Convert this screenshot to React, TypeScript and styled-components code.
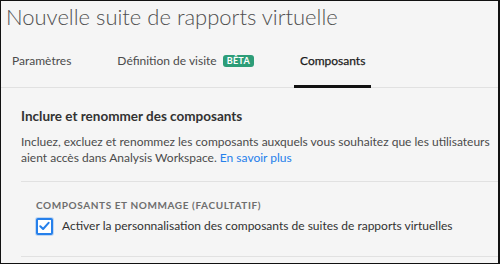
import React from 'react'
import styled, { createGlobalStyle } from 'styled-components'

const GlobalStyle = createGlobalStyle`
  html, body {
    margin: 0;
    padding: 0;
    background: #fff;
  }
  body {
    font-family: Lato, "Open Sans", sans-serif;
  }
  * { box-sizing: border-box; }
`

const tabs = [
  { id: 'params', label: 'Paramètres' },
  { id: 'visit', label: 'Définition de visite', badge: 'BÊTA' },
  { id: 'components', label: 'Composants' },
]

const App = () => {
  const active = 'components'

  return (
    <>
      <GlobalStyle />
      <Frame>
        <Title>Nouvelle suite de rapports virtuelle</Title>
        <TabList>
          {tabs.map((t) => (
            <Tab key={t.id} $active={t.id === active}>
              {t.label}
              {t.badge && <Badge>{t.badge}</Badge>}
            </Tab>
          ))}
        </TabList>
        <Section>
          <Heading>Inclure et renommer des composants</Heading>
          <Description>
            Incluez, excluez et renommez les composants auxquels vous souhaitez que les utilisateurs
            aient accès dans Analysis Workspace. <Link href="#">En savoir plus</Link>
          </Description>
          <Divider $gap={15} />
          <Group>
            <GroupLabel>Composants et nommage (facultatif)</GroupLabel>
            <CheckRow>
              <Box>
                <svg width="11" height="10" viewBox="0 0 11 10">
                  <path
                    d="M1.3 5.3 L4.1 8 L9.6 1.8"
                    fill="none"
                    stroke="#2680eb"
                    strokeWidth="2"
                    strokeLinecap="round"
                    strokeLinejoin="round"
                  />
                </svg>
              </Box>
              Activer la personnalisation des composants de suites de rapports virtuelles
            </CheckRow>
          </Group>
          <Divider $gap={21} />
        </Section>
      </Frame>
    </>
  )
}

export default App

const Frame = styled.div`
  width: 500px;
  height: 264px;
  border: 1px solid #111;
  border-right-width: 2px;
  background: #f5f5f5;
  overflow: hidden;
`

const Title = styled.h1`
  margin: 1px 0 0;
  padding-left: 5px;
  font-size: 22px;
  line-height: 30px;
  font-weight: 300;
  color: #505050;
`

const TabList = styled.div`
  display: flex;
  gap: 34px;
  padding: 21px 0 0 5px;
  border-bottom: 1px solid #e1e1e1;
`

const Tab = styled.div<{ $active: boolean }>`
  position: relative;
  display: flex;
  align-items: center;
  gap: 6px;
  height: 34px;
  padding: 0 6px 18px;
  font-size: 12px;
  line-height: 16px;
  color: ${({ $active }) => ($active ? '#1b1b1b' : '#4b4b4b')};
  -webkit-text-stroke: ${({ $active }) => ($active ? '0.25px #1b1b1b' : '0')};

  &::after {
    content: '';
    display: ${({ $active }) => ($active ? 'block' : 'none')};
    position: absolute;
    left: 0;
    right: 0;
    bottom: -1px;
    height: 3px;
    background: #111;
  }
`

const Badge = styled.span`
  display: inline-block;
  padding: 0 4px;
  border-radius: 3px;
  background: #2d9d78;
  color: #fff;
  font-size: 9px;
  line-height: 12px;
  font-weight: 700;
  letter-spacing: 0.3px;
`

const Section = styled.div`
  padding: 19px 0 0 20px;
`

const Heading = styled.h2`
  margin: 0;
  font-size: 13.5px;
  line-height: 18px;
  font-weight: 700;
  color: #323232;
`

const Description = styled.p`
  margin: 9px 0 0;
  font-size: 12px;
  line-height: 16px;
  color: #4b4b4b;
`

const Link = styled.a`
  color: #2680eb;
  text-decoration: none;
`

const Divider = styled.div<{ $gap: number }>`
  height: 1px;
  margin-top: ${({ $gap }) => $gap}px;
  background: #e1e1e1;
`

const Group = styled.div`
  padding: 16px 0 0 15px;
`

const GroupLabel = styled.div`
  font-size: 10px;
  line-height: 14px;
  font-weight: 700;
  letter-spacing: 0.06em;
  text-transform: uppercase;
  color: #6e6e6e;
`

const CheckRow = styled.label`
  display: flex;
  align-items: center;
  gap: 9px;
  margin-top: 5px;
  font-size: 12px;
  line-height: 18px;
  color: #323232;
`

const Box = styled.span`
  display: flex;
  align-items: center;
  justify-content: center;
  width: 17px;
  height: 17px;
  border: 2px solid #2680eb;
  border-radius: 2px;
  background: #fff;
  box-shadow: 0 0 0 1px rgba(38, 128, 235, 0.25);
`
